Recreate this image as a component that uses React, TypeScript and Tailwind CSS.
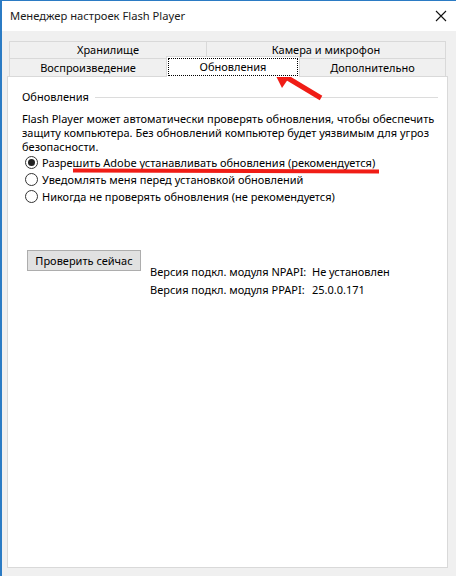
import React from "react";

const font = "font-['Noto_Sans',sans-serif]";

function Radio({ checked, label }: { checked?: boolean; label: string }) {
  return (
    <div className="flex h-[17px] items-center">
      <span className="ml-[3px] flex h-[13px] w-[13px] items-center justify-center rounded-full border border-[#333333] bg-white">
        {checked && <span className="h-[7px] w-[7px] rounded-full bg-[#222222]" />}
      </span>
      <span className="ml-[4px] whitespace-nowrap">{label}</span>
    </div>
  );
}

export default function App() {
  return (
    <div
      className={`relative h-[576px] w-[456px] overflow-hidden border-l-2 border-t border-[#2b7bc4] bg-[#f0f0f0] text-[11px] leading-[16px] text-black ${font}`}
    >
      {/* title bar */}
      <div className="flex h-[30px] items-center justify-between bg-white pl-[8px] pr-[8px]">
        <span className="text-[11.2px] text-[#1a1a1a]">Менеджер настроек Flash Player</span>
        <svg width="12" height="12" viewBox="0 0 12 12" className="mr-[1px]">
          <path d="M1 1 L11 11 M11 1 L1 11" stroke="#111" strokeWidth="1.1" fill="none" />
        </svg>
      </div>

      <div className="pt-[10px]">
        {/* tabs */}
        <div className="ml-[7px] w-[437px]">
          <div className="flex h-[17px]">
            <div className="flex w-[198px] items-center justify-center border border-b-0 border-[#d9d9d9]">
              Хранилище
            </div>
            <div className="flex flex-1 items-center justify-center border border-b-0 border-l-0 border-[#d9d9d9]">
              Камера и микрофон
            </div>
          </div>
          <div className="flex h-[18px] items-end border-t border-[#d9d9d9]">
            <div className="flex h-[18px] w-[158px] items-center justify-center border-x border-[#d9d9d9] pt-[1px]">
              Воспроизведение
            </div>
            <div className="relative z-10 -mb-[1px] -ml-[1px] flex h-[21px] w-[134px] border border-b-0 border-[#d9d9d9] bg-white p-[1px]">
              <div className="flex flex-1 items-center justify-center border border-dotted border-black">
                Обновления
              </div>
            </div>
            <div className="flex h-[18px] flex-1 items-center justify-center border-r border-[#d9d9d9] pt-[1px]">
              Дополнительно
            </div>
          </div>
        </div>

        {/* panel */}
        <div className="ml-[5px] h-[492px] w-[441px] border border-[#d9d9d9] bg-white">
          <div className="pl-[14px] pt-[12px]">
            <div className="flex items-center">
              <span>Обновления</span>
              <span className="ml-[6px] mr-[9px] h-px flex-1 bg-[#dcdcdc]" />
            </div>
            <div className="mt-[7px] leading-[14px]">
              <div className="whitespace-nowrap">
                Flash Player может автоматически проверять обновления, чтобы обеспечить
              </div>
              <div className="whitespace-nowrap">
                защиту компьютера. Без обновлений компьютер будет уязвимым для угроз
              </div>
              <div className="whitespace-nowrap">безопасности.</div>
            </div>
            <Radio checked label="Разрешить Adobe устанавливать обновления (рекомендуется)" />
            <Radio label="Уведомлять меня перед установкой обновлений" />
            <Radio label="Никогда не проверять обновления (не рекомендуется)" />

            <div className="mt-[45px] flex items-start">
              <button
                type="button"
                className="ml-[5px] h-[21px] w-[114px] border border-[#adadad] bg-[#e1e1e1] text-center"
              >
                Проверить сейчас
              </button>
              <div className="ml-[9px] mt-[13px] grid grid-cols-[162px_auto] leading-[18px]">
                <span className="whitespace-nowrap">Версия подкл. модуля NPAPI:</span>
                <span className="whitespace-nowrap">Не установлен</span>
                <span className="whitespace-nowrap">Версия подкл. модуля PPAPI:</span>
                <span className="whitespace-nowrap">25.0.0.171</span>
              </div>
            </div>
          </div>
        </div>
      </div>

      {/* annotations */}
      <div className="absolute left-[71px] top-[168px] h-[4px] w-[306px] rotate-[0.2deg] bg-[#f01d16]" />
      <svg className="pointer-events-none absolute left-0 top-0" width="456" height="576">
        <polygon points="270,67 293,68 280,87" fill="#f01d16" />
        <line x1="284" y1="76" x2="319" y2="97" stroke="#f01d16" strokeWidth="5" />
      </svg>
    </div>
  );
}
